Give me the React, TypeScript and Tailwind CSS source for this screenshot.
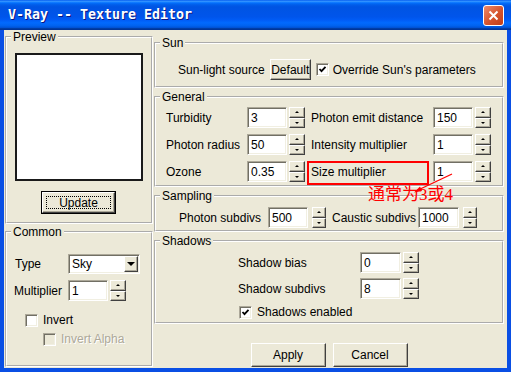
const raised =
  "bg-[#ece9d8] border border-t-white border-l-white border-r-[#404040] border-b-[#404040] shadow-[inset_-1px_-1px_0_#aca899]";
const sunken =
  "border border-t-[#aca899] border-l-[#aca899] border-r-white border-b-white shadow-[inset_1px_1px_0_#716f64,inset_-1px_-1px_0_#f1efe2]";

function Group({ label, className, children }: { label: string; className?: string; children?: React.ReactNode }) {
  return (
    <fieldset
      className={`border-2 border-white [--tw-border-style:groove] [border-style:groove] min-w-0 ${className ?? ""}`}
    >
      <legend className="ml-[4px] px-[2px] leading-[14px]">{label}</legend>
      {children}
    </fieldset>
  );
}

function SpinHalf({ up }: { up?: boolean }) {
  return (
    <div className={`flex-1 flex items-center justify-center ${raised}`}>
      <div
        className={
          up
            ? "border-x-[2px] border-x-transparent border-b-[2px] border-b-black"
            : "border-x-[2px] border-x-transparent border-t-[2px] border-t-black"
        }
      />
    </div>
  );
}

function Spin({ narrow }: { narrow?: boolean }) {
  return (
    <div className={`flex flex-col h-[21px] ${narrow ? "w-[14px]" : "w-[16px]"}`}>
      <SpinHalf up />
      <SpinHalf />
    </div>
  );
}

function Field({ value, w = "w-[40px]" }: { value: string; w?: string }) {
  return <div className={`h-[21px] bg-white ${sunken} flex items-center pl-[3px] ${w}`}>{value}</div>;
}

function Check({ checked, disabled }: { checked?: boolean; disabled?: boolean }) {
  return (
    <div
      className={`w-[13px] h-[13px] shrink-0 flex items-center justify-center ${sunken} ${
        disabled ? "bg-[#ece9d8]" : "bg-white"
      }`}
    >
      {checked && (
        <svg width="9" height="9" viewBox="0 0 9 9">
          <polyline points="1.5,4 3.5,6.2 7.5,1.8" fill="none" stroke="#000" strokeWidth="1.8" />
        </svg>
      )}
    </div>
  );
}

function Button({ children, className }: { children: React.ReactNode; className?: string }) {
  return (
    <div className={`flex items-center justify-center overflow-hidden whitespace-nowrap ${raised} ${className ?? ""}`}>
      {children}
    </div>
  );
}

function TitleBar() {
  return (
    <div className="h-[30px] shrink-0 flex items-center justify-between pl-[8px] pr-[7px] bg-[linear-gradient(to_bottom,#0058ee_0%,#3593ff_4%,#288eff_6%,#127dff_8%,#036ffc_10%,#0262ee_14%,#0057e5_20%,#0054e3_24%,#0055eb_56%,#005bf5_66%,#026afe_76%,#0062ef_86%,#0052d6_92%,#0040ab_94%,#003092_100%)]">
      <span className="font-['DejaVu_Sans_Mono',monospace] font-bold text-[13.3px] text-white [text-shadow:1px_1px_0_#0a1883]">
        V-Ray -- Texture Editor
      </span>
      <div className="w-[21px] h-[21px] rounded-[3px] border border-white bg-[linear-gradient(135deg,#ec8a6c,#d5532c_55%,#c23e17)] flex items-center justify-center">
        <svg width="11" height="11" viewBox="0 0 11 11">
          <path d="M1.5 1.5 L9.5 9.5 M9.5 1.5 L1.5 9.5" stroke="#fff" strokeWidth="2" />
        </svg>
      </div>
    </div>
  );
}

export default function App() {
  return (
    <div className="relative w-[511px] h-[372px] flex flex-col bg-[#0a4fe4] font-['Liberation_Sans',Arial,sans-serif] text-[12px] text-black">
      <TitleBar />
      <div className="flex-1 mx-[4px] mb-[4px] bg-[#ece9d8] flex gap-[1px] pl-[1px]">
        {/* left column */}
        <div className="w-[148px] flex flex-col gap-[1px]">
          <Group label="Preview" className="h-[194px]">
            <div className="flex flex-col items-center pt-[9px] pr-[1px]">
              <div className="w-[128px] h-[128px] bg-white border-2 border-[#1a1a1a]" />
              <div className="mt-[10px] w-[75px] h-[23px] border border-black">
                <Button className="w-full h-full p-[3px]">
                  <span className="flex-1 self-stretch flex items-center justify-center border border-dotted border-black">
                    Update
                  </span>
                </Button>
              </div>
            </div>
          </Group>
          <Group label="Common" className="h-[142px]">
            <div className="flex flex-col pt-[15px] pl-[8px]">
              <div className="flex items-center h-[20px]">
                <span className="w-[53px]">Type</span>
                <div className={`w-[72px] h-[20px] bg-white ${sunken} flex items-center pr-[1px]`}>
                  <span className="flex-1 pl-[3px]">Sky</span>
                  <div className={`w-[14px] h-[16px] flex items-center justify-center ${raised}`}>
                    <div className="border-x-[4px] border-x-transparent border-t-[4px] border-t-black" />
                  </div>
                </div>
              </div>
              <div className="flex items-center h-[21px] mt-[6px] -ml-[1px]">
                <span className="w-[54px]">Multiplier</span>
                <Field value="1" />
                <div className="ml-[2px]">
                  <Spin />
                </div>
              </div>
              <div className="flex items-center h-[14px] gap-[5px] mt-[12px] ml-[10px]">
                <Check />
                <span>Invert</span>
              </div>
              <div className="flex items-center h-[14px] gap-[5px] mt-[5px] ml-[28px] text-[#aca899] [text-shadow:1px_1px_0_#fff]">
                <Check disabled />
                <span>Invert Alpha</span>
              </div>
            </div>
          </Group>
        </div>

        {/* right column */}
        <div className="w-[350px] flex flex-col">
          <Group label="Sun" className="mt-[6px] h-[52px]">
            <div className="flex items-center h-[21px] mt-[9px] pl-[22px]">
              <span>Sun-light source</span>
              <Button className="ml-[5px] w-[41px] h-[21px]">Default</Button>
              <div className="ml-[5px]">
                <Check checked />
              </div>
              <span className="ml-[4px]">Override Sun's parameters</span>
            </div>
          </Group>

          <Group label="General" className="mt-[2px] h-[97px]">
            <div className="grid grid-cols-[81px_40px_18px_128px_40px_18px] gap-y-[6px] pl-[10px] mt-[3px]">
              {[
                ["Turbidity", "3", "Photon emit distance", "150"],
                ["Photon radius", "50", "Intensity multiplier", "1"],
                ["Ozone", "0.35", "Size multiplier", "1"],
              ].map(([a, av, b, bv]) => (
                <div key={a} className="contents">
                  <span className="self-center">{a}</span>
                  <Field value={av} />
                  <div className="ml-[2px]">
                    <Spin />
                  </div>
                  <span className="self-center pl-[6px]">{b}</span>
                  <Field value={bv} />
                  <div className="ml-[2px]">
                    <Spin />
                  </div>
                </div>
              ))}
            </div>
          </Group>

          <Group label="Sampling" className="mt-[2px] h-[43px]">
            <div className="flex items-center h-[21px] mt-[4px] pl-[23px]">
              <span className="w-[89px]">Photon subdivs</span>
              <Field value="500" />
              <div className="ml-[4px]">
                <Spin narrow />
              </div>
              <span className="ml-[6px] w-[86px]">Caustic subdivs</span>
              <Field value="1000" w="w-[41px]" />
              <div className="ml-[4px]">
                <Spin narrow />
              </div>
            </div>
          </Group>

          <Group label="Shadows" className="mt-[2px] h-[90px]">
            <div className="flex flex-col pt-[4px] pl-[82px]">
              <div className="flex items-center h-[21px]">
                <span className="w-[122px]">Shadow bias</span>
                <Field value="0" w="w-[41px]" />
                <div className="ml-[2px]">
                  <Spin />
                </div>
              </div>
              <div className="flex items-center h-[21px] mt-[5px]">
                <span className="w-[122px]">Shadow subdivs</span>
                <Field value="8" w="w-[41px]" />
                <div className="ml-[2px]">
                  <Spin />
                </div>
              </div>
              <div className="flex items-center h-[14px] gap-[5px] mt-[6px] ml-[1px]">
                <Check checked />
                <span>Shadows enabled</span>
              </div>
            </div>
          </Group>

          <div className="flex justify-center gap-[7px] mt-[19px]">
            <Button className="w-[75px] h-[24px]">Apply</Button>
            <Button className="w-[75px] h-[24px]">Cancel</Button>
          </div>
        </div>
      </div>

      {/* red annotation drawn over the dialog */}
      <div className="absolute left-[307px] top-[161px] w-[122px] h-[24px] border-2 border-[#f00]" />
      <svg className="absolute left-[400px] top-[168px]" width="60" height="30" viewBox="0 0 60 30">
        <path d="M16 23 L52 6" stroke="#f00" strokeWidth="1.3" fill="none" />
        <path d="M14 24.5 L20 18.5 L22 23 Z" fill="#f00" />
      </svg>
      <span className="absolute left-[368px] top-[186px] text-[17px] leading-[18px] text-[#f00] font-['Liberation_Serif','Noto_Sans_CJK_SC',serif]">
        通常为3或4
      </span>
    </div>
  );
}
